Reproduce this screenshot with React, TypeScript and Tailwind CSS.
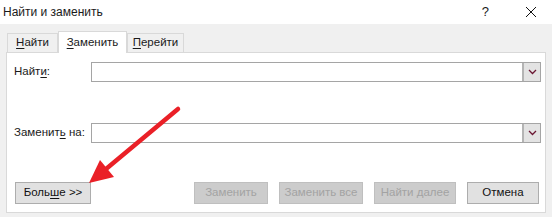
import React from "react";

type BtnProps = { label: React.ReactNode; width: string; disabled?: boolean };

const DialogButton = ({ label, width, disabled }: BtnProps) => {
  return (
    <button
      type="button"
      className={
        disabled
          ? `${width} h-[22px] border border-[#bfbfbf] bg-[#cccccc] text-[#a3a3a3] leading-none`
          : `${width} h-[22px] border border-[#adadad] bg-[#e1e1e1] text-[#111] leading-none`
      }
    >
      {label}
    </button>
  );
};

const Combo = () => {
  return (
    <div className="flex h-[20px] flex-1 border border-[#a5a5a5] bg-white">
      <div className="flex-1" />
      <div className="flex w-[18px] items-center justify-center border-l-2 border-[#b4b4b4] bg-[#e3e3e3]">
        <svg width="9" height="6" viewBox="0 0 9 6">
          <path d="M1 1 L4.5 4.5 L8 1" fill="none" stroke="#6b1733" strokeWidth="1.3" />
        </svg>
      </div>
    </div>
  );
};

const Tab = ({ children, active, width }: { children: React.ReactNode; active?: boolean; width: string }) => {
  return (
    <div
      className={
        active
          ? `${width} relative z-10 -mb-px flex h-[22px] items-center justify-center border border-b-0 border-[#d9d9d9] bg-white`
          : `${width} flex h-[19px] items-center justify-center border border-b-0 border-[#d9d9d9] bg-[#f0f0f0]`
      }
    >
      {children}
    </div>
  );
};

export default function App() {
  return (
    <div className="relative h-[217px] w-[552px] overflow-hidden bg-[#f0f0f0] font-['Liberation_Sans',Arial,sans-serif] text-[11.5px] text-[#1a1a1a]">
      {/* title bar */}
      <div className="flex h-[24px] items-center justify-between bg-white">
        <span className="pl-[3px] text-[12px]">Найти и заменить</span>
        <div className="flex items-center">
          <span className="mr-[36px] text-[13px]">?</span>
          <svg width="12" height="12" viewBox="0 0 12 12" className="mr-[15px]">
            <path d="M1 1 L11 11 M11 1 L1 11" stroke="#111" strokeWidth="1" />
          </svg>
        </div>
      </div>

      <div className="px-[6px] pt-[7px]">
        {/* tabs */}
        <div className="flex items-end pl-[1px]">
          <Tab width="w-[51px]">
            <span><u className="underline-offset-2">Н</u>айти</span>
          </Tab>
          <Tab width="w-[69px]" active>
            <span><u className="underline-offset-2">З</u>аменить</span>
          </Tab>
          <Tab width="w-[57px]">
            <span><u className="underline-offset-2">П</u>ерейти</span>
          </Tab>
        </div>

        {/* panel */}
        <div className="h-[161px] w-[540px] border border-[#d9d9d9] bg-white">
          <div className="flex items-center pr-[4px] pt-[9px]">
            <span className="w-[84px] pl-[7px]">Найт<u className="underline-offset-2">и</u>:</span>
            <Combo />
          </div>
          <div className="mt-[41px] flex items-center pr-[4px]">
            <span className="w-[84px] pl-[7px]">Заменит<u className="underline-offset-2">ь</u> на:</span>
            <Combo />
          </div>
          <div className="mt-[39px] flex items-center justify-between pl-[8px] pr-[6px]">
            <DialogButton width="w-[76px]" label={<span>Боль<u className="underline-offset-2">ш</u>е &gt;&gt;</span>} />
            <div className="flex gap-[11px]">
              <DialogButton width="w-[74px]" label="Заменить" disabled />
              <DialogButton width="w-[84px]" label="Заменить все" disabled />
              <DialogButton width="w-[82px]" label="Найти далее" disabled />
              <DialogButton width="w-[72px]" label="Отмена" />
            </div>
          </div>
        </div>
      </div>

      {/* red annotation arrow */}
      <svg className="pointer-events-none absolute left-0 top-0" width="552" height="217" viewBox="0 0 552 217">
        <line x1="178" y1="109" x2="106" y2="169" stroke="#ea2027" strokeWidth="4.5" strokeLinecap="round" />
        <polygon points="89,183 100,160 114,177" fill="#ea2027" />
      </svg>
    </div>
  );
}
